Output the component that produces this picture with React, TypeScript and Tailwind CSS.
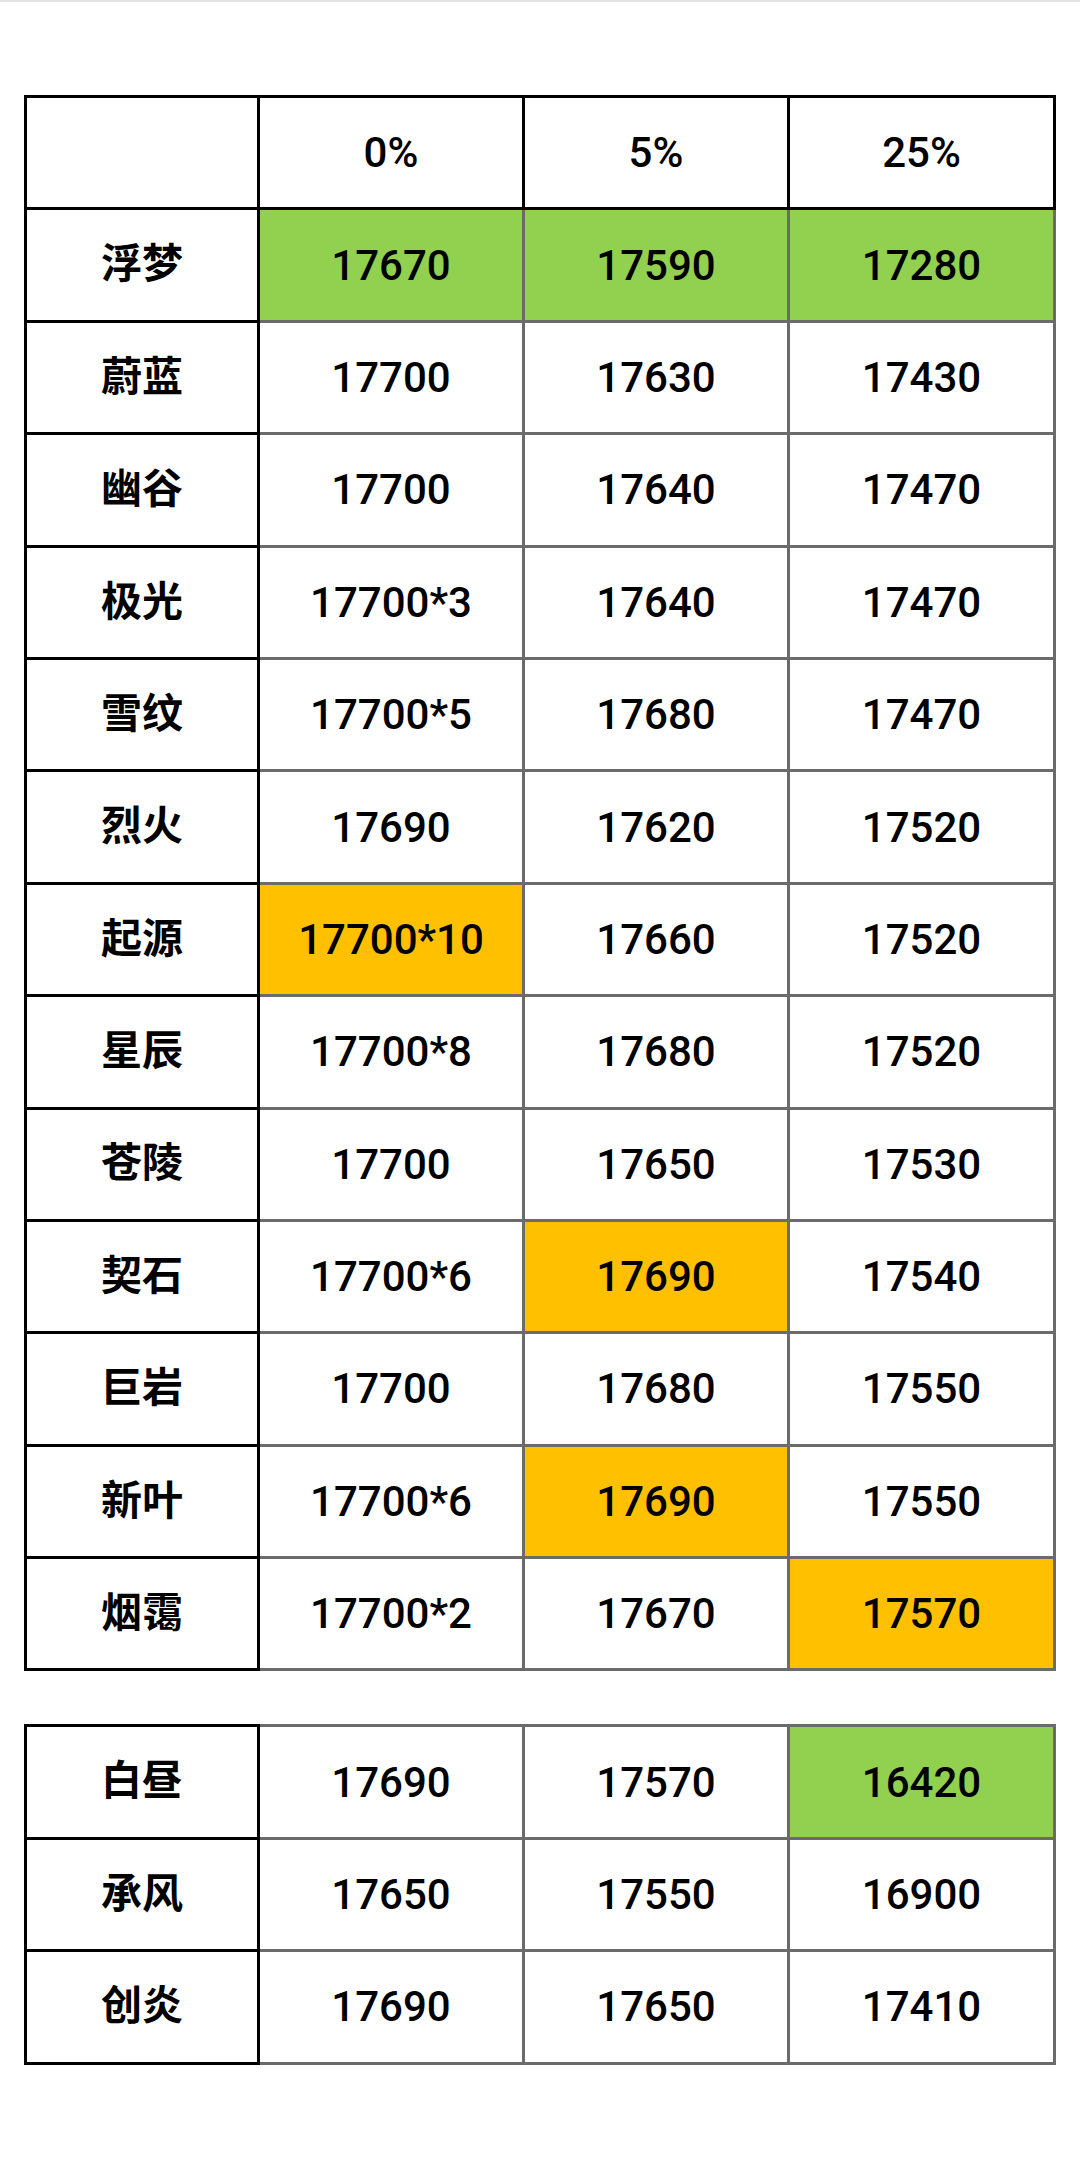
const G = 'bg-[#92d050]';
const O = 'bg-[#ffc000]';

type Row = { name: string; vals: [string, string, string]; hl?: [string?, string?, string?] };

const main: Row[] = [
  { name: '浮梦', vals: ['17670', '17590', '17280'], hl: [G, G, G] },
  { name: '蔚蓝', vals: ['17700', '17630', '17430'] },
  { name: '幽谷', vals: ['17700', '17640', '17470'] },
  { name: '极光', vals: ['17700*3', '17640', '17470'] },
  { name: '雪纹', vals: ['17700*5', '17680', '17470'] },
  { name: '烈火', vals: ['17690', '17620', '17520'] },
  { name: '起源', vals: ['17700*10', '17660', '17520'], hl: [O] },
  { name: '星辰', vals: ['17700*8', '17680', '17520'] },
  { name: '苍陵', vals: ['17700', '17650', '17530'] },
  { name: '契石', vals: ['17700*6', '17690', '17540'], hl: [undefined, O] },
  { name: '巨岩', vals: ['17700', '17680', '17550'] },
  { name: '新叶', vals: ['17700*6', '17690', '17550'], hl: [undefined, O] },
  { name: '烟霭', vals: ['17700*2', '17670', '17570'], hl: [undefined, undefined, O] },
];

const extra: Row[] = [
  { name: '白昼', vals: ['17690', '17570', '16420'], hl: [undefined, undefined, G] },
  { name: '承风', vals: ['17650', '17550', '16900'] },
  { name: '创炎', vals: ['17690', '17650', '17410'] },
];

const font = { fontFamily: 'Roboto, "Noto Sans CJK SC", sans-serif' };

function Body({ rows }: { rows: Row[] }) {
  return (
    <>
      {rows.map((r) => (
        <tr key={r.name} className="h-[112.4px]">
          <td className="border-[3px] border-black text-center font-bold text-[41px]">{r.name}</td>
          {r.vals.map((v, i) => (
            <td key={i} className={`border-[3px] border-[#6b6b6b] text-center ${r.hl?.[i] ?? 'bg-white'}`}>
              {v}
            </td>
          ))}
        </tr>
      ))}
    </>
  );
}

function Cols() {
  return (
    <colgroup>
      <col className="w-[233px]" />
      <col className="w-[265px]" />
      <col className="w-[265px]" />
      <col className="w-[266px]" />
    </colgroup>
  );
}

export default function App() {
  return (
    <div className="w-[1080px] h-[2160px] bg-white border-t-2 border-[#e3e3e3] text-black font-medium text-[42px]" style={font}>
      <table className="ml-[24px] mt-[93px] border-collapse table-fixed w-[1029px]">
        <Cols />
        <tbody>
          <tr className="h-[112.4px]">
            <td className="border-[3px] border-black"></td>
            <td className="border-[3px] border-black text-center">0%</td>
            <td className="border-[3px] border-black text-center">5%</td>
            <td className="border-[3px] border-black text-center">25%</td>
          </tr>
          <Body rows={main} />
        </tbody>
      </table>
      <table className="ml-[24px] mt-[53px] border-collapse table-fixed w-[1029px]">
        <Cols />
        <tbody>
          <Body rows={extra} />
        </tbody>
      </table>
    </div>
  );
}
